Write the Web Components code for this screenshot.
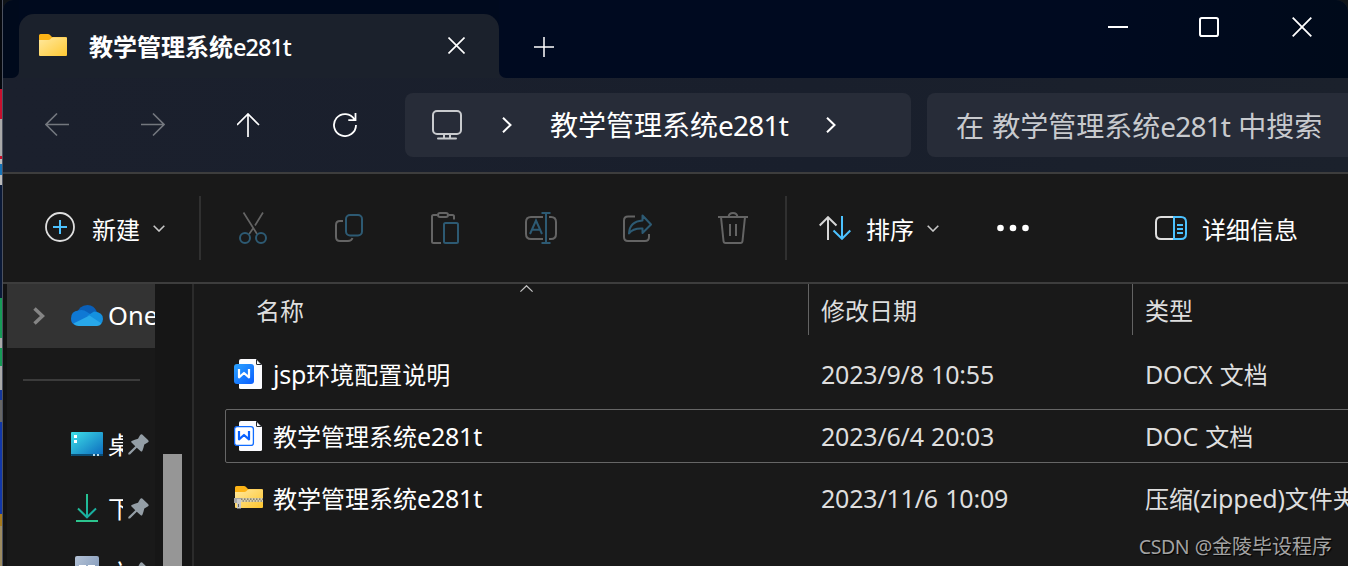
<!DOCTYPE html>
<html lang="zh-CN">
<head>
<meta charset="UTF-8">
<title>教学管理系统e281t</title>
<style>
    html, body {
        margin: 0;
        width: 1348px;
        height: 566px;
        overflow: hidden;
        background: #101418;
    }
    body {
        font-family: 'Noto Sans', 'Noto Sans CJK SC', sans-serif;
        font-size: 24px;
        color: #fff;
    }
</style>
</head>
<body>
<explorer-window></explorer-window>
<script>
    const CJK = "'Noto Sans CJK SC', 'Noto Sans', sans-serif";

    // 图标: [宽, 高, 内容]
    const ICONS = {
        folder: [28, 22, `
            <defs><linearGradient id="g" x1="0" y1="0" x2="1" y2="1"><stop offset="0" stop-color="#ffe9a0"/><stop offset="1" stop-color="#ffc933"/></linearGradient></defs>
            <path d="M0 8V1.500Q0 0 1.500 0H9q1 0 1.800.8L13 3h13.500Q28 3 28 4.500V10H0z" fill="#fcb316"/>
            <path d="M0 6h9.500q1 0 1.800-.8l1.200-1.200q.8-.8 1.800-.8H27q1 0 1 1V21q0 1-1 1H1q-1 0-1-1z" fill="url(#g)"/>`],
        close: [20, 20, `<path d="M.7.7l18.600 18.600M19.300.7L.7 19.300" stroke="#fff" stroke-width="1.800"/>`],
        tabClose: [17, 17, `<path d="M.5.5l16 16M16.500.5l-16 16" stroke="#fff" stroke-width="1.600"/>`],
        plus: [20, 20, `<path d="M10 0v20M0 10h20" stroke="#fff" stroke-width="1.500"/>`],
        min: [20, 2, `<path d="M0 1h20" stroke="#fff" stroke-width="2"/>`],
        max: [20, 20, `<rect x="1" y="1" width="18" height="18" rx="1.800" stroke="#fff" stroke-width="2"/>`],
        back: [24, 24, `<path d="M24 11.500H1M12 .5l-11 11 11 11" stroke="#73777e" stroke-width="1.600"/>`],
        forward: [24, 24, `<path d="M0 11.500h23M12 .5l11 11-11 11" stroke="#73777e" stroke-width="1.600"/>`],
        up: [24, 24, `<path d="M11 24V1M0 12L11 1l11 11" stroke="#fff" stroke-width="1.700"/>`],
        refresh: [24, 24, `<path d="M21.500 6.500A11 11 0 1 0 23 12M22.500 0v7.200h-7.200" stroke="#fff" stroke-width="1.800"/>`],
        monitor: [30, 30, `<rect x="1" y="1" width="28" height="23" rx="4" stroke="#c9cbce" stroke-width="2"/><path d="M6 28.500h18M12 24v4.500M18 24v4.500" stroke="#c9cbce" stroke-width="2" stroke-linecap="round"/>`],
        crumb: [10, 16, `<path d="M1 .8L8.500 8 1 15.200" stroke="#fff" stroke-width="2"/>`],
        add: [30, 30, `<circle cx="15" cy="15" r="14" stroke="#dedede" stroke-width="1.800"/><path d="M15 8v14M8 15h14" stroke="#4cc2ff" stroke-width="2"/>`],
        caret: [12, 7, `<path d="M.7.7L6 6 11.300.7" stroke="#c8c8c8" stroke-width="1.600"/>`],
        cut: [28, 32, `<path d="M4.500.5L18 22M24 .5L16 13.500M14 16.500L10.200 22" stroke="#646464" stroke-width="1.700"/><circle cx="6" cy="26" r="5" stroke="#2d5a73" stroke-width="2"/><circle cx="22" cy="26" r="5" stroke="#2d5a73" stroke-width="2"/>`],
        copy: [28, 28, `<path d="M8 7H5Q1 7 1 11v12q0 4 4 4h8q3.500 0 4.500-3" stroke="#646464" stroke-width="2"/><rect x="11" y="1" width="16" height="20.500" rx="4" stroke="#2d5a73" stroke-width="2"/>`],
        paste: [28, 32, `<path d="M6.500 3H2.500Q1 3 1 4.500V29.500Q1 31 2.500 31H10M17.500 3h4Q23 3 23 4.500V7.500" stroke="#646464" stroke-width="2"/><rect x="7" y="1" width="10" height="4" rx="2" stroke="#646464" stroke-width="2"/><rect x="13" y="11" width="14" height="20" rx="1.500" stroke="#2d5a73" stroke-width="2"/>`],
        rename: [32, 32, `<path d="M18 5H6Q1 5 1 10v12q0 5 5 5h12M24 5h2q5 0 5 5v12q0 5-5 5h-2" stroke="#646464" stroke-width="2"/><path d="M16.500 1h9M21 1v30M16.500 31h9M5 22l6-13.500L17 22M7 17.800h8" stroke="#2d5a73" stroke-width="2"/>`],
        share: [29, 28, `<path d="M12 2.500H5Q1 2.500 1 6.500V23q0 4 4 4h17q4 0 4-4v-3" stroke="#646464" stroke-width="2"/><path d="M19.500 1.500L28 10.500l-8.500 8.500V14.500Q10 14 6 19.500 6.500 7.500 19.500 6.500z" stroke="#2d5a73" stroke-width="2" stroke-linejoin="round"/>`],
        trash: [30, 32, `<path d="M0 5h30M10.500 5Q11 1 15 1t4.500 4M3 5l2.500 24q.2 2 2 2h15q1.800 0 2-2L27 5M12 12v12M18 12v12" stroke="#646464" stroke-width="2"/>`],
        sort: [32, 24, `<path d="M9 24V1.500M.7 9.500L9 1.200l8.500 8.300" stroke="#d6d6d6" stroke-width="2"/><path d="M23 0v22.500M14.500 14.500L23 22.800l8.300-8.300" stroke="#4cc2ff" stroke-width="2"/>`],
        more: [32, 8, `<g fill="#fff"><circle cx="3.500" cy="4" r="3.300"/><circle cx="16" cy="4" r="3.300"/><circle cx="28.500" cy="4" r="3.300"/></g>`],
        details: [32, 24, `<path d="M19 1H6Q1 1 1 6v12q0 5 5 5h13" stroke="#dedede" stroke-width="2"/><path d="M19 1h7q5 0 5 5v12q0 5-5 5h-7zM22 9h6M22 13h6M22 17h6" stroke="#4cc2ff" stroke-width="2"/>`],
        expand: [12, 18, `<path d="M1.500 1.500L9.500 9l-8 7.500" stroke="#858585" stroke-width="3.500"/>`],
        cloud: [32, 21, `
            <path d="M5 10Q8 0 16.500 0 23 0 26 7L18 14z" fill="#0a5fb8"/>
            <path d="M7.500 5.500Q12 4 16 7l9 5.500L3.500 20Q0 18 0 13.500 0 6 7.500 5.500z" fill="#0f78d4"/>
            <path d="M16 11l7-4.500Q32 7 32 14q0 3-2.500 5.500z" fill="#1490df"/>
            <path d="M2.500 18.500L18.500 10.500 30.500 18.500Q28.500 21 26 21H7.500Q4.500 21 2.500 18.500z" fill="#28a8ea"/>`],
        desktop: [32, 24, `
            <defs><linearGradient id="g" x1="0" y1="0" x2="1" y2="1"><stop offset="0" stop-color="#3ee0e8"/><stop offset="1" stop-color="#0b68bd"/></linearGradient></defs>
            <rect width="32" height="24" rx="1" fill="url(#g)"/><path d="M0 22h32v1q0 1-1 1H1q-1 0-1-1z" fill="#0b4c73"/>
            <path d="M3 3h3v3H3zM3 8h3v3H3z" fill="#fff"/><path d="M22 22h2v2h-2zM26 22h2v2h-2z" fill="#b9d9e8"/>`],
        download: [22, 28, `
            <defs><linearGradient id="g" gradientUnits="userSpaceOnUse" x1="0" y1="0" x2="16" y2="28"><stop offset="0" stop-color="#2bc98d"/><stop offset="1" stop-color="#13a6a6"/></linearGradient></defs>
            <path d="M11 0v23M2 14.500l9 8.800 9-8.800" stroke="url(#g)" stroke-width="2"/><path d="M0 27h22" stroke="#2cc48e" stroke-width="2"/>`],
        docs: [24, 32, `
            <defs><linearGradient id="g" x1="0" y1="0" x2="1" y2="1"><stop offset="0" stop-color="#b4c2d6"/><stop offset="1" stop-color="#7690b4"/></linearGradient></defs>
            <rect width="24" height="32" rx="2" fill="url(#g)"/><path d="M4 9h7v2H4zM13 9h7v2h-7zM4 14h16v2H4zM4 19h16v2H4z" fill="#fff"/>`],
        pin: [21, 21, `<path d="M12 1.200q1.500-1.700 3 0l5 4.800q1.500 1.500-.3 2.600l-3.400 1.900q-.7 3.400-2 6.500-.7 1-1.600.2L8.800 13.700 2 20.500H.3V19l7-6.800-3.800-3.600q-.9-.9.2-1.600 3-1.500 6.300-2.200z" fill="#949ea6"/>`],
        docx: [28, 31, `
            <defs><linearGradient id="g" x1="0" y1="0" x2="1" y2="1"><stop offset="0" stop-color="#2ba3ff"/><stop offset="1" stop-color="#0a5dff"/></linearGradient></defs>
            <path d="M7 0H22l6 6V28.500q0 1.500-1.500 1.500H6.500Q5 30 5 28.500V2Q5 0 7 0z" fill="#fcfcff"/><path d="M22 0v4.500Q22 6 23.500 6H28z" fill="#23272e"/><path d="M23 1.500V5h3.500z" fill="#fff"/>
            <rect y="5" width="20" height="20" rx="3" fill="url(#g)"/>
            <path d="M5 10v8.300L10 14l5 4.300V10" stroke="#fff" stroke-width="2.200" stroke-linejoin="round"/>`],
        doc: [28, 31, `
            <path d="M7 0H22l6 6V28.500q0 1.500-1.500 1.500H6.500Q5 30 5 28.500V2Q5 0 7 0z" fill="#fcfcff"/><path d="M22 0v4.500Q22 6 23.500 6H28z" fill="#23272e"/><path d="M23 1.500V5h3.500z" fill="#fff"/>
            <rect x=".6" y="5.600" width="18.800" height="18.800" rx="2.500" fill="#fff" stroke="#0f6bff" stroke-width="1.300"/>
            <path d="M5 10v8.300L10 14l5 4.300V10" stroke="#0a62ff" stroke-width="2.200" stroke-linejoin="round"/>`],
        zip: [29, 24, `
            <defs><linearGradient id="g" x1="0" y1="0" x2="1" y2="1"><stop offset="0" stop-color="#ffe9a0"/><stop offset="1" stop-color="#fdc52d"/></linearGradient></defs>
            <path d="M1 9V1.500Q1 0 2.500 0H10q1 0 1.800.8L14 3h13.500Q29 3 29 4.500V10H1z" fill="#fcb316"/>
            <path d="M1 6h9.500q1 0 1.800-.8l1.200-1.200q.8-.8 1.800-.8H28q1 0 1 1V21q0 1-1 1H2q-1 0-1-1z" fill="url(#g)"/>
            <path d="M7 12h22v4H7z" fill="#d8cfae"/><path d="M7 13.200h22M8.500 15h20.500" stroke="#6d6754" stroke-width="1.200" stroke-dasharray="1.500 1.500"/>
            <path d="M0 12h7v5H0z" fill="#a6a6a6"/><path d="M3 13h4v9.500H3z" fill="#c9c9c9"/><path d="M4.500 18v3" stroke="#666"/>`],
        asc: [13, 7, `<path d="M.4 6.600L6.500.7l6.100 5.900" stroke="#c4c4c4" stroke-width="1.200"/>`]
    };

    class BaseElement extends HTMLElement {
        connectedCallback() {
            if (this.shadowRoot) return;
            const template = document.createElement('template');
            template.innerHTML = this.render();
            this.attachShadow({ mode: 'open' }).appendChild(template.content.cloneNode(true));
        }
    }

    class UiIcon extends BaseElement {
        render() {
            const [w, h, body] = ICONS[this.getAttribute('name')];
            return `
                <style>
                    :host { display: block; flex: none; width: ${w}px; height: ${h}px; }
                    svg { display: block; }
                </style>
                <svg width="${w}" height="${h}" viewBox="0 0 ${w} ${h}" fill="none">${body}</svg>
            `;
        }
    }

    // 中英文混排: 西文单独设置字号和字距
    class UiText extends BaseElement {
        render() {
            const runs = this.getAttribute('value').replace(/[\x20-\x7e]+/g, '<span>$&</span>');
            return `
                <style>
                    :host { display: block; flex: none; font-family: ${CJK}; line-height: 36px; height: 36px; }
                    div { white-space: pre; }
                    span {
                        font-family: 'Noto Sans', sans-serif;
                        font-size: var(--latin-size, 25px);
                        letter-spacing: var(--latin-gap, -0.2px);
                        word-spacing: var(--latin-space, 1px);
                        font-weight: var(--latin-weight, 400);
                        line-height: 1;
                    }
                </style>
                <div>${runs}</div>
            `;
        }
    }

    class TabStrip extends BaseElement {
        render() {
            return `
                <style>
                    :host { display: grid; grid-template-columns: 16px 480px 1fr; height: 78px; background: #1b202d; }
                    .left { background: #000a1c; border-bottom-right-radius: 7px; }
                    .hold { background: linear-gradient(#000a1e 40px, #1b212c 40px); padding-top: 14px; }
                    .tab {
                        height: 64px; box-sizing: border-box; padding: 0 34px 2px 20px;
                        display: flex; align-items: center;
                        background: #1b212c; border-radius: 15px 15px 0 0;
                    }
                    .tab ui-text {
                        margin: 2px auto 0 22px; font-weight: 700;
                        --latin-size: 23.5px; --latin-gap: -1px; --latin-weight: 500;
                    }
                    .right {
                        display: flex; align-items: flex-start;
                        background: linear-gradient(90deg, #000a20 70%, #000a1a);
                        border-bottom-left-radius: 7px;
                        padding: 17px 36px 0 35px;
                    }
                    .new { margin: 20px auto 0 0; }
                    .min { margin: 9px 71px 0 0; }
                    .max { margin-right: 73px; }
                </style>
                <div class="left"></div>
                <div class="hold">
                    <div class="tab">
                        <ui-icon name="folder"></ui-icon>
                        <ui-text value="教学管理系统e281t"></ui-text>
                        <ui-icon name="tabClose"></ui-icon>
                    </div>
                </div>
                <div class="right">
                    <ui-icon class="new" name="plus"></ui-icon>
                    <ui-icon class="min" name="min"></ui-icon>
                    <ui-icon class="max" name="max"></ui-icon>
                    <ui-icon name="close"></ui-icon>
                </div>
            `;
        }
    }

    class AddressBar extends BaseElement {
        render() {
            return `
                <style>
                    :host {
                        display: flex; align-items: center; height: 94px; box-sizing: border-box;
                        background: linear-gradient(90deg, #1b202d, #191f2c 60%, #1b212c);
                        padding-left: 42px; font-size: 28px;
                        --latin-size: 28px; --latin-gap: -0.8px; --latin-space: 1.7px;
                    }
                    .nav { display: flex; gap: 72px; width: 360px; flex: none; }
                    .box { display: flex; align-items: center; height: 64px; box-sizing: border-box; border-radius: 8px; background: #272c38; }
                    .path { width: 506px; flex: none; padding-left: 27px; }
                    .path ui-icon + ui-icon { margin: 0 38px 0 40px; }
                    .path ui-text { margin-top: -2px; }
                    .path ui-text + ui-icon { margin-left: 38px; }
                    .search { flex: 1; min-width: 0; margin-left: 16px; padding-left: 29px; border-radius: 8px 0 0 8px; color: #c8cace; }
                    .search ui-text { margin-top: 0; }
                </style>
                <div class="nav">
                    <ui-icon name="back"></ui-icon>
                    <ui-icon name="forward"></ui-icon>
                    <ui-icon name="up"></ui-icon>
                    <ui-icon name="refresh"></ui-icon>
                </div>
                <div class="box path">
                    <ui-icon name="monitor"></ui-icon>
                    <ui-icon name="crumb"></ui-icon>
                    <ui-text value="教学管理系统e281t"></ui-text>
                    <ui-icon name="crumb"></ui-icon>
                </div>
                <div class="box search"><ui-text value="在 教学管理系统e281t 中搜索"></ui-text></div>
            `;
        }
    }

    class CommandBar extends BaseElement {
        render() {
            return `
                <style>
                    :host {
                        display: flex; align-items: center; height: 112px; box-sizing: border-box;
                        border-top: 2px solid #3d3d3d; border-bottom: 2px solid #3d3d3d;
                        background: #191919; padding: 0 49px 0 42px;
                    }
                    ui-text { margin-top: 2px; }
                    .add { margin: -2px 17px 0 0; }
                    .arrow { margin: 0 0 0 13px; }
                    .line { flex: none; width: 2px; height: 64px; background: #303030; }
                    .line.first { margin-left: 34px; }
                    .tools { display: flex; flex: none; width: 584px; align-items: center; }
                    .tools div { width: 96px; display: flex; justify-content: center; }
                    .tools div:first-child { margin-left: 4px; }
                    .sort { margin: 0 15px 0 32px; }
                    .more { margin: 0 auto 0 58px; }
                    .details { margin-right: 15px; }
                    .details + ui-text { margin-right: 1px; }
                </style>
                <ui-icon class="add" name="add"></ui-icon>
                <ui-text value="新建"></ui-text>
                <ui-icon class="arrow" name="caret"></ui-icon>
                <div class="line first"></div>
                <div class="tools">
                    <div><ui-icon name="cut"></ui-icon></div>
                    <div><ui-icon name="copy"></ui-icon></div>
                    <div><ui-icon name="paste"></ui-icon></div>
                    <div><ui-icon name="rename"></ui-icon></div>
                    <div><ui-icon name="share"></ui-icon></div>
                    <div><ui-icon name="trash"></ui-icon></div>
                </div>
                <div class="line"></div>
                <ui-icon class="sort" name="sort"></ui-icon>
                <ui-text value="排序"></ui-text>
                <ui-icon class="arrow" name="caret"></ui-icon>
                <ui-icon class="more" name="more"></ui-icon>
                <ui-icon class="details" name="details"></ui-icon>
                <ui-text value="详细信息"></ui-text>
            `;
        }
    }

    class SideItem extends BaseElement {
        render() {
            return `
                <style>
                    :host { display: flex; align-items: center; height: 64px; padding-left: 64px; }
                    .icon { width: 32px; display: flex; justify-content: center; margin-right: 5px; }
                    .label { width: 15px; overflow: hidden; margin: 0 5px 0 0; }
                    ui-icon { flex: none; }
                </style>
                <div class="icon"><ui-icon name="${this.getAttribute('icon')}"></ui-icon></div>
                <div class="label"><ui-text value="${this.getAttribute('label')}"></ui-text></div>
                <ui-icon name="pin"></ui-icon>
            `;
        }
    }

    class SidePane extends BaseElement {
        render() {
            return `
                <style>
                    :host {
                        display: flex; flex: none; width: 189px; height: 282px; box-sizing: border-box; overflow: hidden;
                        border-left: 4px solid #121212; background: #191919;
                    }
                    .tree { width: 148px; }
                    .one { height: 64px; display: flex; align-items: center; background: #333; overflow: hidden; padding-left: 26px; }
                    .one ui-text { margin: -2px 0 0 5px; --latin-size: 25.5px; --latin-gap: 0; }
                    .one ui-icon + ui-icon { margin: -1px 0 0 26px; }
                    .rule { width: 117px; height: 2px; background: #3b3b3b; margin: 31px 0 31px 16px; }
                    .gutter { width: 37px; background: #161616; }
                    .thumb { width: 19px; height: 112px; margin: 170px 0 0 8px; background: #969696; }
                </style>
                <div class="tree">
                    <div class="one">
                        <ui-icon name="expand"></ui-icon>
                        <ui-icon name="cloud"></ui-icon>
                        <ui-text value="One"></ui-text>
                    </div>
                    <div class="rule"></div>
                    <side-item icon="desktop" label="桌"></side-item>
                    <side-item icon="download" label="下"></side-item>
                    <side-item icon="docs" label="文"></side-item>
                </div>
                <div class="gutter"><div class="thumb"></div></div>
            `;
        }
    }

    class FileRow extends BaseElement {
        render() {
            return `
                <style>
                    :host {
                        display: grid; grid-template-columns: 595px 324px 1fr; align-items: center;
                        height: 54px; box-sizing: border-box; margin: 0 -2px 8px 31px; border: 1px solid transparent;
                        white-space: nowrap; color: #dedede;
                    }
                    :host([focused]) { border-color: #666; border-radius: 2px; }
                    .name { display: flex; align-items: center; color: #fff; padding-left: 8px; }
                    .icon { width: 29px; margin-right: 10px; }
                    ui-text { margin-top: 0; }
                </style>
                <div class="name">
                    <div class="icon"><ui-icon name="${this.getAttribute('icon')}"></ui-icon></div>
                    <ui-text value="${this.getAttribute('name')}"></ui-text>
                </div>
                <ui-text value="${this.getAttribute('date')}"></ui-text>
                <ui-text value="${this.getAttribute('type')}"></ui-text>
            `;
        }
    }

    class FileList extends BaseElement {
        render() {
            return `
                <style>
                    :host { display: block; flex: 1; min-width: 0; border-left: 2px solid #2b2b2b; background: #191919; overflow: hidden; }
                    header { display: grid; grid-template-columns: 614px 324px 1fr; height: 51px; margin-bottom: 12px; color: #dedede; }
                    header div { display: flex; align-items: center; }
                    header div + div { border-left: 1px solid #636363; padding-left: 12px; }
                    header div:first-child { padding-left: 62px; }
                    header ui-text { margin-top: 1px; }
                    header ui-icon { align-self: flex-start; margin: 1px 0 0 216px; }
                </style>
                <header>
                    <div><ui-text value="名称"></ui-text><ui-icon name="asc"></ui-icon></div>
                    <div><ui-text value="修改日期"></ui-text></div>
                    <div><ui-text value="类型"></ui-text></div>
                </header>
                <slot></slot>
            `;
        }
    }

    class ExplorerWindow extends BaseElement {
        render() {
            return `
                <style>
                    :host { display: flex; position: relative; width: 1348px; height: 566px; overflow: hidden; }
                    /* 窗口左侧露出的桌面 */
                    .edge {
                        flex: none; width: 3px; box-sizing: border-box; border-right: 1px solid #4c5260;
                        background: linear-gradient(#05080d 89px, #c8102e 89px 119px, #aaa 119px 156px, #c8102e 156px 159px,
                            #bbb 159px 164px, #1673b8 164px 175px, #bbb 175px 185px, #0b1a38 185px 298px, #169b57 298px 338px,
                            #aaa 338px 348px, #169b57 348px 366px, #aaa 366px 390px, #14379c 390px 400px, #666 400px 422px,
                            #1137a8 422px 514px, #a67a1e 514px 526px, #9c8b62 526px);
                    }
                    .window { flex: 1; min-width: 0; border-radius: 10px 12px 0 0; overflow: hidden; }
                    .main { display: flex; height: 282px; }
                    .mark {
                        position: absolute; right: 16px; bottom: 2px; font-size: 20px; color: #a3a3a3;
                        --latin-size: 19.5px; --latin-gap: -0.4px; text-shadow: 1px 1px 1px #000;
                    }
                </style>
                <div class="edge"></div>
                <div class="window">
                    <tab-strip></tab-strip>
                    <address-bar></address-bar>
                    <command-bar></command-bar>
                    <div class="main">
                        <side-pane></side-pane>
                        <file-list>
                            <file-row icon="docx" name="jsp环境配置说明" date="2023/9/8 10:55" type="DOCX 文档"></file-row>
                            <file-row focused icon="doc" name="教学管理系统e281t" date="2023/6/4 20:03" type="DOC 文档"></file-row>
                            <file-row icon="zip" name="教学管理系统e281t" date="2023/11/6 10:09" type="压缩(zipped)文件夹"></file-row>
                        </file-list>
                    </div>
                </div>
                <ui-text class="mark" value="CSDN @金陵毕设程序"></ui-text>
            `;
        }
    }

    customElements.define('ui-icon', UiIcon);
    customElements.define('ui-text', UiText);
    customElements.define('tab-strip', TabStrip);
    customElements.define('address-bar', AddressBar);
    customElements.define('command-bar', CommandBar);
    customElements.define('side-item', SideItem);
    customElements.define('side-pane', SidePane);
    customElements.define('file-row', FileRow);
    customElements.define('file-list', FileList);
    customElements.define('explorer-window', ExplorerWindow);
</script>
</body>
</html>
